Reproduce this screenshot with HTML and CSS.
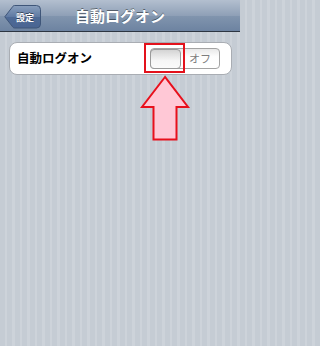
FILE: index.html
```html
<!DOCTYPE html>
<html lang="ja">
<head>
<meta charset="utf-8">
<title>自動ログオン</title>
<link rel="stylesheet" href="styles.css">
</head>
<body>
<div class="screen">
  <header class="navbar">
    <div class="back">
      <svg class="back-shape" width="37" height="24" viewBox="0 0 37 24">
        <defs>
          <linearGradient id="bg" x1="0" y1="0" x2="0" y2="1">
            <stop offset="0" stop-color="#8aa0be"/>
            <stop offset="0.5" stop-color="#5f7aa3"/>
            <stop offset="0.51" stop-color="#4e6a96"/>
            <stop offset="1" stop-color="#4a6592"/>
          </linearGradient>
        </defs>
        <path d="M0.8 11.8 L9 1.2 Q9.6 0.5 10.6 0.5 L32.5 0.5 Q36.5 0.5 36.5 4.5 L36.5 19 Q36.5 23 32.5 23 L10.6 23 Q9.6 23 9 22.3 Z" fill="url(#bg)" stroke="#3f5679" stroke-width="1"/>
      </svg>
      <span class="back-label">設定</span>
    </div>
    <h1 class="title">自動ログオン</h1>
  </header>
  <main class="content">
    <div class="cell">
      <span class="cell-label">自動ログオン</span>
      <div class="switch">
        <div class="knob"></div>
        <span class="switch-text">オフ</span>
      </div>
    </div>
  </main>
  <div class="highlight"></div>
  <svg class="arrow" width="52" height="70" viewBox="0 0 52 70">
    <polygon points="25,3 2,33 13.5,33 13.5,65.5 36.5,65.5 36.5,33 48,33" fill="#ffc8d6" stroke="#e8101c" stroke-width="2" stroke-linejoin="miter"/>
  </svg>
</div>
</body>
</html>
```
FILE: styles.css
```css
html, body {
  margin: 0;
  padding: 0;
}
html {
  background: repeating-linear-gradient(90deg, #c5ccd4 0, #c5ccd4 5px, #cdd3da 5px, #cdd3da 7.5px);
}
body {
  width: 240px;
  height: 346px;
  overflow: hidden;
  font-family: "Noto Sans CJK JP", "Noto Sans", sans-serif;
}
.screen {
  position: relative;
  width: 240px;
  height: 346px;
  background: repeating-linear-gradient(90deg, #c5ccd4 0, #c5ccd4 5px, #cdd3da 5px, #cdd3da 7.5px);
}
.navbar {
  position: relative;
  height: 31px;
  border-bottom: 1px solid #2d3642;
  background: linear-gradient(#b3bfcf 0%, #8fa0b7 50%, #8195ae 51%, #6d83a1 100%);
  display: flex;
  align-items: center;
  justify-content: center;
}
.back {
  position: absolute;
  left: 4px;
  top: 5px;
  width: 37px;
  height: 24px;
  display: flex;
  align-items: center;
}
.back-shape {
  position: absolute;
  left: 0;
  top: 0;
}
.back-label {
  position: relative;
  padding-left: 12px;
  color: #fff;
  font-size: 9px;
  font-weight: bold;
  line-height: 1;
  text-shadow: 0 -1px 0 rgba(0,0,0,0.45);
}
.title {
  margin: 0;
  color: #fff;
  font-size: 15px;
  font-weight: bold;
  line-height: 1;
  text-shadow: 0 -1px 0 rgba(0,0,0,0.45);
}
.content {
  padding: 10px 8px 0 9px;
}
.cell {
  height: 31px;
  background: #fff;
  border: 1px solid #a9adb3;
  border-radius: 8px;
  display: flex;
  align-items: center;
  justify-content: space-between;
  padding: 0 11px 0 7px;
}
.cell-label {
  font-size: 12.5px;
  font-weight: bold;
  color: #000;
  line-height: 1;
}
.switch {
  width: 68px;
  height: 19px;
  border: 1px solid #a3a3a3;
  border-radius: 4px;
  background: linear-gradient(#e8e8e8, #fdfdfd 40%, #fff);
  display: flex;
  align-items: center;
}
.knob {
  width: 29px;
  height: 18px;
  border: 1px solid #9a9a9a;
  border-radius: 4px;
  margin-left: -1px;
  background: linear-gradient(#d4d4d4, #f6f6f6 60%, #fafafa);
}
.switch-text {
  flex: 1;
  text-align: center;
  font-size: 11px;
  color: #7d7d7d;
  line-height: 1;
}
.highlight {
  position: absolute;
  left: 144px;
  top: 43px;
  width: 37px;
  height: 26px;
  border: 2px solid #e3121c;
}
.arrow {
  position: absolute;
  left: 140px;
  top: 74px;
}
```
